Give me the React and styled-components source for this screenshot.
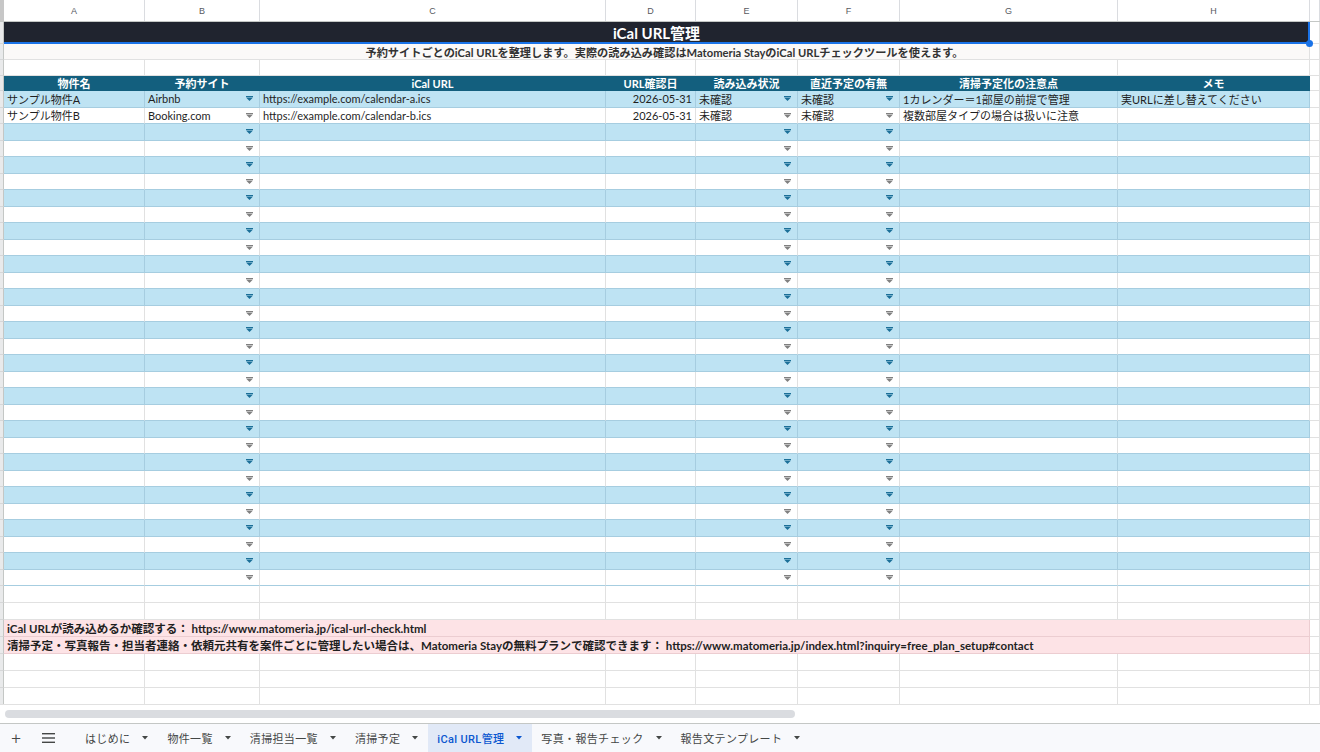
import styled, { createGlobalStyle } from 'styled-components'

const COLS = '4px 141px 115px 346px 90px 102px 102px 218px 192px 1fr'
const FONT = `"Lato", "Noto Sans CJK JP", sans-serif`
const UI_FONT = `"Roboto", "Noto Sans CJK JP", sans-serif`

const GlobalStyle = createGlobalStyle`
  html, body {
    margin: 0;
    padding: 0;
    background: #fff;
    overflow: hidden;
  }
  body {
    font-family: ${FONT};
  }
`

const Page = styled.div`
  width: 1320px;
  height: 752px;
  display: flex;
  flex-direction: column;
  overflow: hidden;
  background: #fff;
`

const Grid = styled.div`
  flex: 1;
  overflow: hidden;
`

const LetterRow = styled.div`
  display: grid;
  grid-template-columns: ${COLS};
  height: 22px;
  border-bottom: 1px solid #c4c7c5;
  box-sizing: border-box;
`

const Letter = styled.div`
  border-right: 1px solid #dadce0;
  display: flex;
  align-items: center;
  justify-content: center;
  font-family: "Liberation Sans", sans-serif;
  font-size: 9px;
  color: #575a5f;
`

const Corner = styled.div`
  background: #c7c7c7;
`

const Row = styled.div`
  display: grid;
  grid-template-columns: ${COLS};
  height: ${p => p.$h}px;
  background: ${p => p.$bg || '#fff'};
  position: relative;
`

const Gutter = styled.div`
  background: #e9eaeb;
  border-right: 1px solid #c4c7c5;
  border-bottom: 1px solid #d6d7d8;
  box-sizing: border-box;
`

const Cell = styled.div`
  box-sizing: border-box;
  grid-column: ${p => (p.$span ? `span ${p.$span}` : 'auto')};
  border-right: 1px solid ${p => p.$vline || '#e1e1e1'};
  border-bottom: 1px solid ${p => p.$hline || '#e1e1e1'};
  background: ${p => p.$bg || 'transparent'};
  padding: 0 3px 0 ${p => p.$indent || 3}px;
  display: flex;
  align-items: center;
  justify-content: ${p => p.$align || 'flex-start'};
  gap: 4px;
  font-size: ${p => p.$size || 11}px;
  font-weight: ${p => (p.$bold ? 700 : 400)};
  color: ${p => p.$color || '#1f1f1f'};
  white-space: nowrap;
  overflow: hidden;
`

const DropCell = styled(Cell)`
  justify-content: space-between;
  padding-right: 6px;
`

const Selection = styled.div`
  position: absolute;
  left: 4px;
  right: 10px;
  top: 0;
  bottom: 0;
  border-right: 2px solid #1a73e8;
  border-bottom: 2px solid #1a73e8;
  pointer-events: none;
`

const Handle = styled.div`
  position: absolute;
  right: 7px;
  bottom: -3px;
  width: 7px;
  height: 7px;
  border-radius: 50%;
  background: #1a73e8;
  z-index: 3;
`

const ScrollArea = styled.div`
  height: 20px;
  box-sizing: border-box;
  border-top: 1px solid #e1e1e1;
  border-bottom: 1px solid #c4c7c5;
  display: flex;
  align-items: center;
  padding-left: 5px;
`

const Thumb = styled.div`
  width: 790px;
  height: 8px;
  border-radius: 4px;
  background: #dadce0;
`

const TabBar = styled.div`
  height: 28px;
  background: #f8f9fc;
  display: flex;
  align-items: stretch;
  font-family: ${UI_FONT};
`

const IconBtn = styled.div`
  width: 32px;
  display: flex;
  align-items: center;
  justify-content: center;
  color: #444746;
  font-size: 17px;
  font-weight: 300;
`

const Spacer = styled.div`
  width: 12px;
`

const Tab = styled.div`
  display: flex;
  align-items: center;
  gap: 12px;
  padding: 0 10px 0 9px;
  font-size: 11px;
  letter-spacing: 0.35px;
  color: ${p => (p.$active ? '#0b57d0' : '#444746')};
  font-weight: ${p => (p.$active ? 500 : 400)};
  background: ${p => (p.$active ? '#e1e9f7' : 'transparent')};
`

const HEAD_BG = '#135f7e'
const BLUE = '#bee3f3'
const BLUE_LINE = '#a6cde0'
const PINK = '#fde3e6'
const PINK_LINE = '#eccdd1'

function Arrow({ color }) {
  return (
    <svg width="7" height="5" viewBox="0 0 7 5">
      <rect x="0" y="0" width="7" height="1" fill={color} />
      <polygon points="0,1.5 7,1.5 3.5,5" fill={color} />
    </svg>
  )
}

function TabArrow({ color }) {
  return (
    <svg width="6" height="4" viewBox="0 0 6 4">
      <polygon points="0,0 6,0 3,3.5" fill={color} />
    </svg>
  )
}

function MenuIcon() {
  return (
    <svg width="13" height="10" viewBox="0 0 13 10">
      <rect x="0" y="0" width="13" height="1.4" fill="#444746" />
      <rect x="0" y="4.3" width="13" height="1.4" fill="#444746" />
      <rect x="0" y="8.6" width="13" height="1.4" fill="#444746" />
    </svg>
  )
}

const headers = ['物件名', '予約サイト', 'iCal URL', 'URL確認日', '読み込み状況', '直近予定の有無', '清掃予定化の注意点', 'メモ']

const filled = [
  {
    name: 'サンプル物件A',
    site: 'Airbnb',
    url: 'https://example.com/calendar-a.ics',
    date: '2026-05-31',
    status: '未確認',
    recent: '未確認',
    note: '1カレンダー＝1部屋の前提で管理',
    memo: '実URLに差し替えてください',
  },
  {
    name: 'サンプル物件B',
    site: 'Booking.com',
    url: 'https://example.com/calendar-b.ics',
    date: '2026-05-31',
    status: '未確認',
    recent: '未確認',
    note: '複数部屋タイプの場合は扱いに注意',
    memo: '',
  },
]

const rows = Array.from({ length: 30 }, (_, i) => filled[i] || {})

const tabs = ['はじめに', '物件一覧', '清掃担当一覧', '清掃予定', 'iCal URL管理', '写真・報告チェック', '報告文テンプレート']

function DataRow({ data, index }) {
  const blue = index % 2 === 0
  const bg = blue ? BLUE : '#fff'
  const vline = blue ? BLUE_LINE : '#e1e1e1'
  const hline = BLUE_LINE
  const arrow = blue ? '#1b6f98' : '#808080'
  return (
    <Row $h={16.5} $bg={bg}>
      <Gutter />
      <Cell $vline={vline} $hline={hline}>{data.name}</Cell>
      <DropCell $vline={vline} $hline={hline}>
        <span>{data.site}</span>
        <Arrow color={arrow} />
      </DropCell>
      <Cell $vline={vline} $hline={hline}>{data.url}</Cell>
      <Cell $vline={vline} $hline={hline} $align="flex-end">{data.date}</Cell>
      <DropCell $vline={vline} $hline={hline}>
        <span>{data.status}</span>
        <Arrow color={arrow} />
      </DropCell>
      <DropCell $vline={vline} $hline={hline}>
        <span>{data.recent}</span>
        <Arrow color={arrow} />
      </DropCell>
      <Cell $vline={vline} $hline={hline}>{data.note}</Cell>
      <Cell $vline={vline} $hline={hline}>{data.memo}</Cell>
      <Cell $bg="#fff" />
    </Row>
  )
}

function BlankRow({ h = 17 }) {
  return (
    <Row $h={h}>
      <Gutter />
      {Array.from({ length: 9 }, (_, i) => (
        <Cell key={i} />
      ))}
    </Row>
  )
}

function NoteRow({ children }) {
  return (
    <Row $h={17}>
      <Gutter />
      <Cell $span={8} $bg={PINK} $vline={PINK_LINE} $hline={PINK_LINE} $bold $size={11.5}>
        {children}
      </Cell>
      <Cell />
    </Row>
  )
}

export default function App() {
  return (
    <Page>
      <GlobalStyle />
      <Grid>
        <LetterRow>
          <Corner />
          {['A', 'B', 'C', 'D', 'E', 'F', 'G', 'H', ''].map((l, i) => (
            <Letter key={i}>{l}</Letter>
          ))}
        </LetterRow>

        <Row $h={22} $bg="#20242f">
          <Gutter />
          <Cell $span={8} $vline="#20242f" $hline="#20242f" $align="center" $bold $size={15} $color="#fff">
            iCal URL管理
          </Cell>
          <Cell $bg="#fff" />
          <Selection />
          <Handle />
        </Row>

        <Row $h={16}>
          <Gutter />
          <Cell $span={8} $bg="#fbf9f8" $align="center" $bold $size={11.2} $color="#333" $indent={19}>
            予約サイトごとのiCal URLを整理します。実際の読み込み確認はMatomeria StayのiCal URLチェックツールを使えます。
          </Cell>
          <Cell />
        </Row>

        <BlankRow h={16} />

        <Row $h={15}>
          <Gutter />
          {headers.map(h => (
            <Cell key={h} $bg={HEAD_BG} $vline={HEAD_BG} $hline={HEAD_BG} $align="center" $bold $color="#fff">
              {h}
            </Cell>
          ))}
          <Cell />
        </Row>

        {rows.map((r, i) => (
          <DataRow key={i} data={r} index={i} />
        ))}

        <BlankRow />
        <BlankRow />
        <NoteRow>iCal URLが読み込めるか確認する： https://www.matomeria.jp/ical-url-check.html</NoteRow>
        <NoteRow>
          清掃予定・写真報告・担当者連絡・依頼元共有を案件ごとに管理したい場合は、Matomeria Stayの無料プランで確認できます： https://www.matomeria.jp/index.html?inquiry=free_plan_setup#contact
        </NoteRow>
        <BlankRow />
        <BlankRow />
        <BlankRow />
      </Grid>

      <ScrollArea>
        <Thumb />
      </ScrollArea>

      <TabBar>
        <IconBtn>+</IconBtn>
        <IconBtn>
          <MenuIcon />
        </IconBtn>
        <Spacer />
        {tabs.map(t => {
          const active = t === 'iCal URL管理'
          return (
            <Tab key={t} $active={active}>
              {t}
              <TabArrow color={active ? '#0b57d0' : '#444746'} />
            </Tab>
          )
        })}
      </TabBar>
    </Page>
  )
}
